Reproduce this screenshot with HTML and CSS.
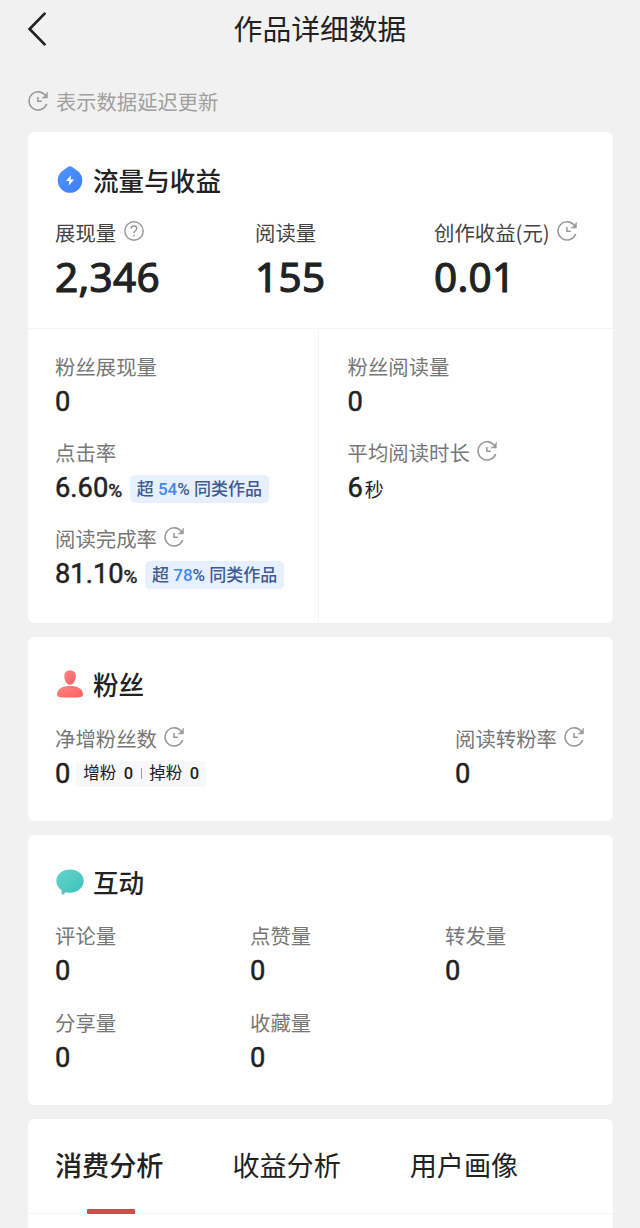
FILE: index.html
```html
<!DOCTYPE html>
<html lang="zh-CN">
<head>
    <meta charset="UTF-8">
    <meta name="viewport" content="width=device-width, initial-scale=1.0">
    <title>作品详细数据</title>
    <link rel="stylesheet" href="styles.css">
</head>
<body>

<!-- 图标 -->
<svg class="sprite" width="0" height="0">
    <symbol id="icon-delay" viewBox="0 0 20 20">
        <path d="M17.8 5A9.1 9.1 0 1 0 18.7 13" fill="none" stroke="currentColor" stroke-width="1.6"/>
        <path d="M19.4 1V7H13.9L17.4 5Z" fill="currentColor" stroke="currentColor" stroke-width="0.5"/>
        <path d="M9.9 6V10.3H13.8" fill="none" stroke="currentColor" stroke-width="1.5"/>
    </symbol>
    <symbol id="icon-help" viewBox="0 0 20 20">
        <circle cx="10" cy="10" r="9.2" fill="none" stroke="currentColor" stroke-width="1.4"/>
        <path d="M7.2 7.7C7.2 6 8.4 5 10 5S12.8 6 12.8 7.5C12.8 9.4 10 9.6 10 12.2" fill="none" stroke="currentColor" stroke-width="1.4"/>
        <circle cx="10" cy="14.6" r="0.9" fill="currentColor"/>
    </symbol>
</svg>

<header class="header">
    <svg class="back" viewBox="0 0 20 34"><path d="M17.6 1.6L2.6 17L17.6 32.4" fill="none" stroke="#222" stroke-width="2.7" stroke-linecap="round"/></svg>
    <h1>作品详细数据</h1>
</header>

<div class="note">
    <svg class="icon"><use href="#icon-delay"/></svg>
    <span>表示数据延迟更新</span>
</div>

<main>
    <!-- 流量与收益 -->
    <section class="card card-traffic">
        <div class="top">
            <h2>
                <svg class="section-icon" viewBox="0 0 28 30">
                    <defs><linearGradient id="blue" x1="0" y1="0" x2="1" y2="1"><stop offset="0" stop-color="#5194fb"/><stop offset="1" stop-color="#3d7ffa"/></linearGradient></defs>
                    <path d="M11.8 2.1Q14 .4 16.2 2.1L22.7 6.8A12.3 12.3 0 1 1 5.3 6.8Z" fill="url(#blue)"/>
                    <path d="M14.9 10.2L9.7 16H13.3L12.7 20.6L18.2 14.6H14.6Z" fill="#fff"/>
                </svg>
                流量与收益
            </h2>
            <div class="totals">
                <div>
                    <div class="label dark">展现量 <svg class="icon"><use href="#icon-help"/></svg></div>
                    <div class="total">2,346</div>
                </div>
                <div>
                    <div class="label dark">阅读量</div>
                    <div class="total">155</div>
                </div>
                <div>
                    <div class="label dark">创作收益(元) <svg class="icon"><use href="#icon-delay"/></svg></div>
                    <div class="total">0.01</div>
                </div>
            </div>
        </div>
        <div class="split">
            <div class="column">
                <div>
                    <div class="label">粉丝展现量</div>
                    <div class="value">0</div>
                </div>
                <div>
                    <div class="label">点击率</div>
                    <div class="value">6.60<small>%</small><span class="rank">超 <b>54</b>% 同类作品</span></div>
                </div>
                <div>
                    <div class="label">阅读完成率 <svg class="icon"><use href="#icon-delay"/></svg></div>
                    <div class="value">81.10<small>%</small><span class="rank">超 <b>78</b>% 同类作品</span></div>
                </div>
            </div>
            <div class="column">
                <div>
                    <div class="label">粉丝阅读量</div>
                    <div class="value">0</div>
                </div>
                <div>
                    <div class="label">平均阅读时长 <svg class="icon"><use href="#icon-delay"/></svg></div>
                    <div class="value">6<small class="unit">秒</small></div>
                </div>
            </div>
        </div>
    </section>

    <!-- 粉丝 -->
    <section class="card card-fans">
        <h2>
            <svg class="section-icon" viewBox="0 0 28 30">
                <defs><linearGradient id="red" x1="0" y1="0" x2="1" y2="1"><stop offset="0" stop-color="#ff8683"/><stop offset="1" stop-color="#ff5d61"/></linearGradient></defs>
                <path d="M14 1.6C18 1.6 20 4 19.7 8C19.4 12.2 17 15.8 14 15.8S8.6 12.2 8.3 8C8 4 10 1.6 14 1.6Z" fill="url(#red)"/>
                <path d="M1 25.5C1 19.5 7 17 14 17S27 19.5 27 25.5C27 28 25 28.6 14 28.6S1 28 1 25.5Z" fill="url(#red)"/>
            </svg>
            粉丝
        </h2>
        <div class="fans">
            <div>
                <div class="label">净增粉丝数 <svg class="icon"><use href="#icon-delay"/></svg></div>
                <div class="value">0<span class="change"><span>增粉</span><span>0</span><i></i><span>掉粉</span><span>0</span></span></div>
            </div>
            <div>
                <div class="label">阅读转粉率 <svg class="icon"><use href="#icon-delay"/></svg></div>
                <div class="value">0</div>
            </div>
        </div>
    </section>

    <!-- 互动 -->
    <section class="card card-interact">
        <h2>
            <svg class="section-icon" viewBox="0 0 28 30">
                <defs><linearGradient id="teal" x1="0" y1="0" x2="1" y2="1"><stop offset="0" stop-color="#64d6ce"/><stop offset="1" stop-color="#3ebfb9"/></linearGradient></defs>
                <path d="M14 2.6C21.8 2.6 27.7 7.5 27.7 14S21.8 25.7 14 25.7C12 25.7 10.7 25.5 9.5 25.2C8.5 26.6 7 27.6 6 27.7C5.3 27.7 5.8 25.8 5.6 23.3C2.4 21.2 .3 18 .3 14C.3 7.5 6.2 2.6 14 2.6Z" fill="url(#teal)"/>
            </svg>
            互动
        </h2>
        <div class="interact">
            <div>
                <div class="label">评论量</div>
                <div class="value">0</div>
            </div>
            <div>
                <div class="label">点赞量</div>
                <div class="value">0</div>
            </div>
            <div>
                <div class="label">转发量</div>
                <div class="value">0</div>
            </div>
            <div>
                <div class="label">分享量</div>
                <div class="value">0</div>
            </div>
            <div>
                <div class="label">收藏量</div>
                <div class="value">0</div>
            </div>
        </div>
    </section>

    <!-- 分析标签 -->
    <section class="card card-tabs">
        <nav class="tabs">
            <a class="tab active">消费分析</a>
            <a class="tab">收益分析</a>
            <a class="tab">用户画像</a>
        </nav>
    </section>
</main>

</body>
</html>
```

FILE: styles.css
```css
* {
    box-sizing: border-box;
}

body {
    margin: 0;
    height: 1228px;
    overflow: hidden;
    background: #f1f1f1;
    color: #222;
    font-family: "Noto Sans CJK SC", sans-serif;
}

h1, h2 {
    margin: 0;
}

.sprite {
    position: absolute;
}

/* 顶部 */
.header {
    display: grid;
    grid-template-columns: 60px 1fr 60px;
    align-items: center;
    height: 58px;
}

.header h1 {
    font-size: 28.8px;
    font-weight: 400;
    line-height: 40px;
    text-align: center;
    padding-bottom: 2px;
}

.back {
    width: 20px;
    height: 34px;
    margin-left: 27px;
}

.note {
    display: flex;
    align-items: center;
    gap: 8px;
    height: 30px;
    margin: 28px 0 16px 28px;
    font-size: 20.3px;
    color: #a0a0a0;
}

.note .icon {
    margin: 0 0 1px;
}

.icon {
    width: 20px;
    height: 20px;
    color: #999;
    flex: none;
    margin: 0 0 3px 7.5px;
}

/* 卡片 */
.card {
    width: 585px;
    margin: 0 0 14px 27.5px;
    background: #fff;
    border-radius: 6px;
}

h2 {
    display: flex;
    align-items: center;
    gap: 9px;
    height: 36px;
    font-size: 25.6px;
    font-weight: 500;
    line-height: 36px;
}

.section-icon {
    width: 28px;
    height: 30px;
    margin-left: 1px;
}

.label {
    display: flex;
    align-items: center;
    height: 30px;
    font-size: 20.4px;
    line-height: 30px;
    color: #777;
    white-space: nowrap;
}

.label.dark {
    color: #444;
}

.value {
    display: flex;
    align-items: baseline;
    height: 32px;
    margin-top: 4px;
    font-family: Roboto, "Noto Sans CJK SC", sans-serif;
    font-size: 27.3px;
    font-weight: 400;
    line-height: 34px;
    white-space: nowrap;
    -webkit-text-stroke: 0.5px #222;
}

.value small {
    font-size: 19px;
}

.value .unit {
    margin-left: 2px;
    -webkit-text-stroke: 0;
}

/* 流量与收益 */
.card-traffic {
    height: 491px;
}

.top {
    height: 197px;
    padding: 30px 27.5px 0;
    border-bottom: 1px solid #f4f4f4;
}

.totals {
    display: grid;
    grid-template-columns: 200px 179px 1fr;
    margin-top: 19px;
}

.total {
    margin-top: 6px;
    font-family: "Noto Sans", sans-serif;
    font-size: 40.5px;
    font-weight: 400;
    line-height: 48px;
    letter-spacing: 0.3px;
    -webkit-text-stroke: 1.1px #222;
}

.split {
    display: grid;
    grid-template-columns: 290.5px 1fr;
    height: 294px;
}

.column {
    display: flex;
    flex-direction: column;
    gap: 20px;
    padding: 22px 0 0 27.5px;
}

.column + .column {
    padding-left: 28.5px;
    border-left: 1px solid #f4f4f4;
}

.rank {
    align-self: center;
    height: 28px;
    margin: 4px 0 0 7.5px;
    padding: 0 7px;
    border-radius: 5px;
    background: #e7f0fe;
    color: #3f5b92;
    font-size: 17px;
    font-weight: 500;
    line-height: 28px;
    -webkit-text-stroke: 0;
}

.rank b {
    font-weight: 500;
    color: #4288f5;
}

/* 粉丝 */
.card-fans {
    height: 184px;
    padding: 29px 27.5px 0;
}

.fans {
    display: grid;
    grid-template-columns: 400px 1fr;
    margin-top: 21px;
}

.change {
    display: flex;
    align-items: center;
    align-self: center;
    gap: 7.5px;
    height: 26px;
    margin: 1px 0 0 6px;
    padding: 0 7px;
    border-radius: 3px;
    background: #f8f8fa;
    font-size: 16.5px;
    line-height: 27px;
    font-weight: 400;
    -webkit-text-stroke: 0;
}

.change span:nth-of-type(even) {
    font-weight: 500;
}

.change i {
    width: 1px;
    height: 11px;
    background: #999;
}

/* 互动 */
.card-interact {
    height: 270px;
    padding: 29px 27.5px 0;
}

.interact {
    display: grid;
    grid-template-columns: repeat(3, 195px);
    row-gap: 21px;
    margin-top: 20px;
}

/* 标签 */
.card-tabs {
    height: 130px;
}

.tabs {
    display: flex;
    gap: 69px;
    height: 95px;
    padding: 26px 27.5px 0;
    border-bottom: 1px solid #f4f4f4;
}

.tab {
    position: relative;
    font-size: 27.1px;
    line-height: 40px;
}

.tab.active {
    font-weight: 500;
}

.tab.active::after {
    content: "";
    position: absolute;
    left: 32px;
    bottom: -1px;
    width: 48px;
    height: 5px;
    border-radius: 1px;
    background: #d8494f;
}
```
